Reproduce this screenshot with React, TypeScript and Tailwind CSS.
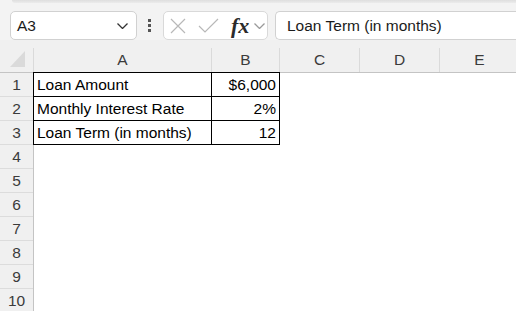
const columns = [
  { label: 'A', width: 'w-[178px]' },
  { label: 'B', width: 'w-[68px]' },
  { label: 'C', width: 'w-[80px]' },
  { label: 'D', width: 'w-[80px]' },
  { label: 'E', width: 'w-[80px]' },
];

const rows = [
  { label: 'Loan Amount', value: '$6,000' },
  { label: 'Monthly Interest Rate', value: '2%' },
  { label: 'Loan Term (in months)', value: '12' },
];

const rowNumbers = [1, 2, 3, 4, 5, 6, 7, 8, 9, 10];

function CancelIcon() {
  return (
    <svg width="16" height="16" viewBox="0 0 16 16" fill="none" stroke="#b8b8b8" strokeWidth="1.2">
      <path d="M1 1 L15 15 M15 1 L1 15" />
    </svg>
  );
}

function CheckIcon() {
  return (
    <svg width="21" height="15" viewBox="0 0 21 15" fill="none" stroke="#b8b8b8" strokeWidth="1.2">
      <path d="M1 8 L7 14 L20 1" />
    </svg>
  );
}

function SmallChevron({ color }: { color: string }) {
  return (
    <svg width="11" height="6" viewBox="0 0 11 6" fill="none" stroke={color} strokeWidth="1.3">
      <path d="M0.5 0.5 L5.5 5.5 L10.5 0.5" />
    </svg>
  );
}

function Toolbar() {
  return (
    <div className="flex h-[37px] items-end pl-[10px]">
      <div className="flex h-[29px] w-[127px] shrink-0 items-center justify-between rounded-[5px] border border-[#d1d1d1] bg-white pl-[6px] pr-[8px]">
        <span className="text-[15.5px] text-[#1b1b1b]">A3</span>
        <SmallChevron color="#333333" />
      </div>
      <div className="flex h-[29px] w-[26px] shrink-0 flex-col items-center justify-center gap-[2px] pr-[2px]">
        <span className="h-[3px] w-[3px] bg-[#555]" />
        <span className="h-[3px] w-[3px] bg-[#555]" />
        <span className="h-[3px] w-[3px] bg-[#555]" />
      </div>
      <div className="flex h-[29px] w-[105px] shrink-0 items-center rounded-[5px] border border-[#d9d9d9] bg-white pl-[6px]">
        <CancelIcon />
        <span className="ml-[12px]">
          <CheckIcon />
        </span>
        <span
          className="ml-[12px] text-[22px] font-semibold italic leading-none text-[#2b2b2b]"
          style={{ fontFamily: '"Liberation Serif", "DejaVu Serif", serif' }}
        >
          fx
        </span>
        <span className="ml-[5px]">
          <SmallChevron color="#9a9a9a" />
        </span>
      </div>
      <div className="ml-[7px] flex h-[29px] w-[260px] shrink-0 items-center rounded-l-[5px] border border-r-0 border-[#d1d1d1] bg-white pl-[11px]">
        <span className="text-[15.5px] text-[#1b1b1b]">Loan Term (in months)</span>
      </div>
    </div>
  );
}

function ColumnHeader() {
  return (
    <div className="flex h-[33px] items-end border-b border-[#c4c4c4] bg-[#f0f0f0]">
      <div className="flex h-[24px] w-[34px] shrink-0 items-start justify-center border-r border-[#dadada] pl-[2px] pt-[3px]">
        <svg width="15" height="16" viewBox="0 0 15 16">
          <path d="M15 0 L15 16 L0 16 Z" fill="#dadada" />
        </svg>
      </div>
      {columns.map((column) => (
        <div
          key={column.label}
          className={`flex h-[24px] shrink-0 items-center justify-center border-r border-[#dadada] text-[15.5px] text-[#3b3b3b] ${column.width}`}
        >
          {column.label}
        </div>
      ))}
    </div>
  );
}

export default function App() {
  return (
    <div
      className="h-[311px] w-[516px] overflow-hidden bg-[#f3f3f3]"
      style={{ fontFamily: '"Liberation Sans", Arial, sans-serif' }}
    >
      <div className="ml-[12px] h-[3px] rounded-bl-[6px] bg-gradient-to-b from-[#dedede] to-[#ececec]" />
      <Toolbar />
      <ColumnHeader />
      <div className="flex">
        <div className="w-[34px] shrink-0 border-r border-[#c4c4c4] bg-[#f0f0f0]">
          {rowNumbers.map((n) => (
            <div
              key={n}
              className="flex h-[24px] items-center justify-center border-b border-[#dcdcdc] text-[15.5px] text-[#3b3b3b]"
            >
              {n}
            </div>
          ))}
        </div>
        <div className="flex-1 bg-white">
          <div className="-ml-px -mt-px w-[247px] border-l border-t border-black">
            {rows.map((row) => (
              <div key={row.label} className="flex">
                <div className="flex h-[24px] w-[178px] items-center border-b border-r border-black pl-[3px] text-[15.5px] text-black">
                  {row.label}
                </div>
                <div className="flex h-[24px] w-[68px] items-center justify-end border-b border-r border-black pr-[3px] text-[15.5px] text-black">
                  {row.value}
                </div>
              </div>
            ))}
          </div>
        </div>
      </div>
    </div>
  );
}
